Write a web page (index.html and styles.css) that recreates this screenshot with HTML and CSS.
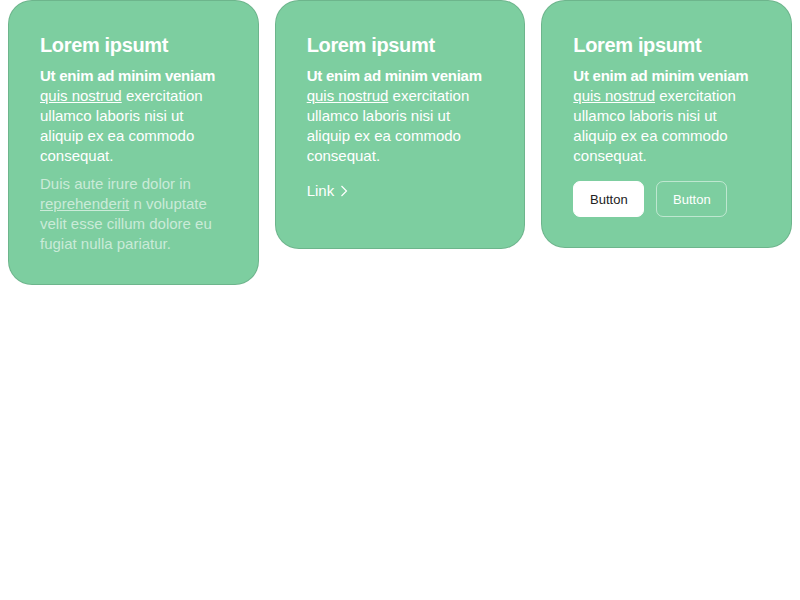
FILE: index.html
```html
<!DOCTYPE html>
<html>
<head>
<meta charset="utf-8">
<link rel="stylesheet" href="styles.css">
</head>
<body>
<div class="grid">
  <div class="card">
    <h2 class="title">Lorem ipsumt</h2>
    <p class="text"><strong>Ut enim ad minim veniam</strong> <a class="ul" href="#">quis nostrud</a> exercitation ullamco laboris nisi ut aliquip ex ea commodo consequat.</p>
    <p class="text muted">Duis aute irure dolor in <a class="ul" href="#">reprehenderit</a> n voluptate velit esse cillum dolore eu fugiat nulla pariatur.</p>
  </div>
  <div class="card">
    <h2 class="title">Lorem ipsumt</h2>
    <p class="text"><strong>Ut enim ad minim veniam</strong> <a class="ul" href="#">quis nostrud</a> exercitation ullamco laboris nisi ut aliquip ex ea commodo consequat.</p>
    <a class="link" href="#">Link <svg width="8" height="12" viewBox="0 0 8 12"><path d="M1.5 1 L6.5 6 L1.5 11" fill="none" stroke="#fff" stroke-width="1.2"/></svg></a>
  </div>
  <div class="card">
    <h2 class="title">Lorem ipsumt</h2>
    <p class="text"><strong>Ut enim ad minim veniam</strong> <a class="ul" href="#">quis nostrud</a> exercitation ullamco laboris nisi ut aliquip ex ea commodo consequat.</p>
    <div class="buttons">
      <button class="btn btn-solid">Button</button>
      <button class="btn btn-outline">Button</button>
    </div>
  </div>
</div>
</body>
</html>
```
FILE: styles.css
```css
body {
  margin: 0 8px;
  font-family: "Liberation Sans", Arial, sans-serif;
  background: #fff;
}
.grid {
  display: grid;
  grid-template-columns: repeat(3, 1fr);
  gap: 16px;
  align-items: start;
}
.card {
  background: #7dcea0;
  border: 1px solid rgba(0, 0, 0, 0.12);
  border-radius: 24px;
  padding: 32px 31px 30px;
  color: #fff;
}
.title {
  margin: 0 0 9px;
  font-size: 20px;
  line-height: 24px;
  font-weight: bold;
  letter-spacing: -0.35px;
}
.text {
  margin: 0;
  font-size: 15px;
  line-height: 20px;
}
.text strong {
  letter-spacing: -0.25px;
}
.text + .text {
  margin-top: 8px;
}
.muted {
  color: rgba(255, 255, 255, 0.6);
}
.ul {
  color: inherit;
  text-decoration: underline;
}
.link {
  display: flex;
  align-items: center;
  gap: 6px;
  margin-top: 15px;
  padding-bottom: 17px;
  font-size: 15px;
  line-height: 20px;
  color: #fff;
  text-decoration: none;
}
.buttons {
  display: flex;
  gap: 12px;
  margin-top: 15px;
}
.btn {
  width: 71px;
  height: 36px;
  border-radius: 7px;
  font-family: "Liberation Sans", Arial, sans-serif;
  font-size: 13px;
  padding: 0;
}
.btn-solid {
  background: #fff;
  color: #222;
  border: 1px solid #fff;
}
.btn-outline {
  background: transparent;
  color: #fff;
  border: 1px solid rgba(255, 255, 255, 0.5);
}
```
